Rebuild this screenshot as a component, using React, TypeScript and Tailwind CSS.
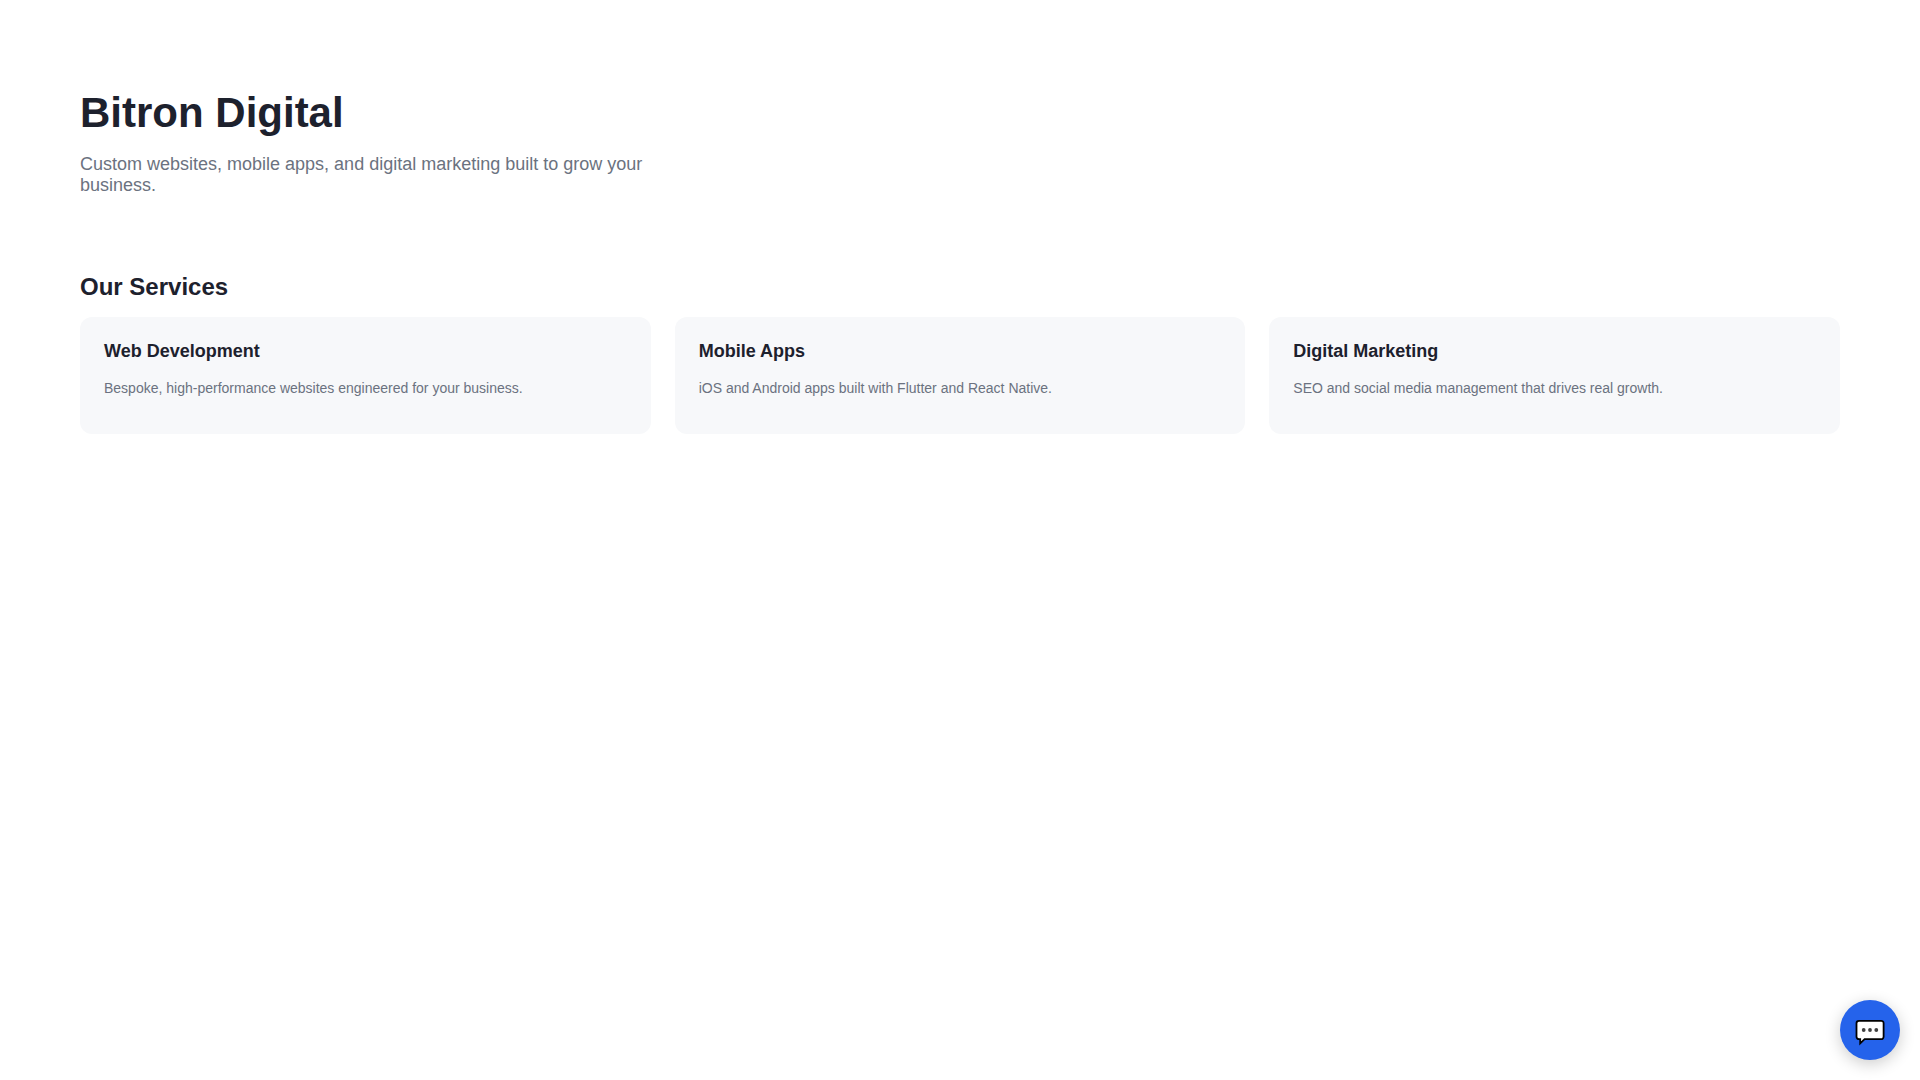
interface serviceObject{
	title:string,
	text:string
}

const services:serviceObject[] = [
	{title:"Web Development", text:"Bespoke, high-performance websites engineered for your business."},
	{title:"Mobile Apps", text:"iOS and Android apps built with Flutter and React Native."},
	{title:"Digital Marketing", text:"SEO and social media management that drives real growth."},
];

function ServiceCard({title,text}:serviceObject) {
  return (
	<article className="rounded-xl bg-[#f7f8fa] px-6 pt-6 pb-[38px]">
		<h3 className="text-[18px] leading-[21px] font-bold text-[#1d212d]">{title}</h3>
		<p className="mt-[18px] text-[14px] leading-[16px] text-[#6b7280]">{text}</p>
	</article>
  )
}

function ChatIcon() {
  return (
	<svg width="30" height="28" viewBox="0 0 30 28" fill="none" aria-hidden="true">
		<path d="M3.9 1.8H26.1A2.4 2.4 0 0 1 28.6 4.2V17.8A2.4 2.4 0 0 1 26.1 20.2H9.6L5.2 24.4V20.2H3.9A2.4 2.4 0 0 1 1.5 17.8V4.2A2.4 2.4 0 0 1 3.9 1.8Z" fill="#fff" stroke="#000" strokeWidth="1.8" />
		<circle cx="8.7" cy="11" r="1.9" fill="#404040" />
		<circle cx="15" cy="11" r="1.9" fill="#404040" />
		<circle cx="21.3" cy="11" r="1.9" fill="#404040" />
	</svg>
  )
}

function App() {
  return (
	<div className="min-h-screen bg-white px-20 font-['Liberation_Sans',Arial,sans-serif]">
		<header className="pt-[89px]">
			<h1 className="text-[42px] leading-[48px] font-bold text-[#1d212d]">Bitron Digital</h1>
			<p className="mt-[17px] max-w-[600px] text-[18px] leading-[21px] text-[#6b7280]">
				Custom websites, mobile apps, and digital marketing built to grow your business.
			</p>
		</header>

		{/* services */}
		<section className="pt-[77px]">
			<h2 className="text-[24px] leading-[28px] font-bold text-[#1d212d]">Our Services</h2>
			<div className="mt-4 grid grid-cols-1 md:grid-cols-3 gap-6">
				{services.map((item) => (
					<ServiceCard key={item.title} title={item.title} text={item.text} />
				))}
			</div>
		</section>

		{/* chat launcher */}
		<button
			type="button"
			aria-label="Open chat"
			className="fixed right-5 bottom-5 flex h-[60px] w-[60px] cursor-pointer items-center justify-center rounded-full bg-[#2563eb] pt-1.5 shadow-[0_4px_16px_rgba(0,0,0,0.2)]"
		>
			<ChatIcon />
		</button>
	</div>
  )
}

export default App
